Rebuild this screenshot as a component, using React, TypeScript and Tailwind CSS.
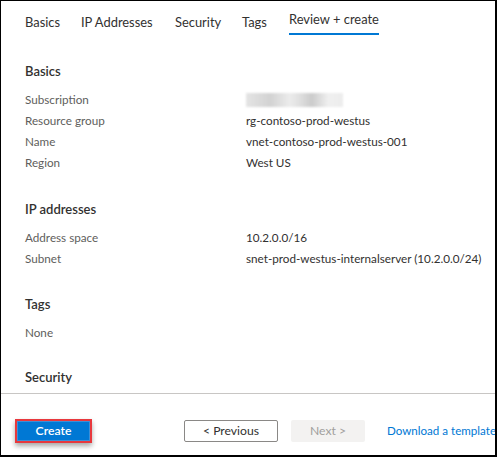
import React from 'react';

const TABS = [
  { label: 'Basics', w: 'w-[56px]' },
  { label: 'IP Addresses', w: 'w-[94px]' },
  { label: 'Security', w: 'w-[67px]' },
  { label: 'Tags', w: 'w-[47px]' },
];

type Row = { label: string; value?: string; blurred?: boolean };

const Section: React.FC<{ title: string; rows: Row[]; top: string }> = ({ title, rows, top }) => (
  <div className={top}>
    <div className="h-[20px] leading-[20px] text-[13px] font-semibold text-[#323130]">{title}</div>
    <div className="mt-[8px]">
      {rows.map((r) => (
        <div key={r.label} className="grid grid-cols-[221px_1fr] h-[21px] leading-[21px] text-[11.7px]">
          <span className="text-[#605e5c]">{r.label}</span>
          {r.blurred ? (
            <span className="flex items-center">
              <span className="block w-[97px] h-[14px] blur-[1px] bg-[linear-gradient(90deg,#e4e4e4,#d2d2d2_25%,#ececec_45%,#e0e0e0_55%,#cbcbcb_68%,#f0f0f0_85%,#ececec)]" />
            </span>
          ) : (
            <span className="text-[#323130] whitespace-nowrap">{r.value}</span>
          )}
        </div>
      ))}
    </div>
  </div>
);

export default function App() {
  return (
    <div
      className="w-[497px] h-[457px] bg-white border-t border-l border-r-2 border-b-2 border-black overflow-hidden flex flex-col"
      style={{ fontFamily: 'Lato, "Noto Sans", sans-serif' }}
    >
      <div className="flex-1 overflow-hidden pl-[24px]">
        {/* tabs */}
        <div className="flex h-[34px]">
          {TABS.map((t) => (
            <div key={t.label} className={`${t.w} shrink-0 pt-[8px]`}>
              <span className="text-[12.9px] leading-[20px] text-[#323130] whitespace-nowrap">{t.label}</span>
            </div>
          ))}
          <div className="pt-[8px] shrink-0">
            <div className="text-[12.9px] leading-[20px] text-[#323130] pb-[4px] border-b-2 border-[#0078d4] whitespace-nowrap">
              Review + create
            </div>
          </div>
        </div>

        <Section
          title="Basics"
          top="mt-[26px]"
          rows={[
            { label: 'Subscription', blurred: true },
            { label: 'Resource group', value: 'rg-contoso-prod-westus' },
            { label: 'Name', value: 'vnet-contoso-prod-westus-001' },
            { label: 'Region', value: 'West US' },
          ]}
        />
        <Section
          title="IP addresses"
          top="mt-[26px]"
          rows={[
            { label: 'Address space', value: '10.2.0.0/16' },
            { label: 'Subnet', value: 'snet-prod-westus-internalserver (10.2.0.0/24)' },
          ]}
        />
        <Section title="Tags" top="mt-[25px]" rows={[{ label: 'None', value: '' }]} />
        <div className="mt-[24px] h-[20px] leading-[20px] text-[13px] font-semibold text-[#323130]">Security</div>
      </div>

      <div className="h-[62px] shrink-0 border-t border-[#c8c6c4] flex items-start pt-[25px] pl-[14px] text-[12.2px]">
        <div className="w-[77px] h-[24px] shrink-0 border-2 border-[#e8383d] shadow-[0_3px_5px_rgba(0,0,0,0.35)] flex">
          <button className="flex-1 bg-[#0078d4] border border-[#3b8fd8] text-white font-semibold leading-[18px]">
            Create
          </button>
        </div>
        <button className="ml-[92px] mt-[1px] w-[94px] h-[22px] shrink-0 border border-[#8a8886] rounded-[2px] text-[#323130] leading-[20px]">
          &lt; Previous
        </button>
        <button className="ml-[13px] mt-[1px] w-[74px] h-[22px] shrink-0 bg-[#f3f2f1] rounded-[2px] text-[#a19f9d] leading-[22px]">
          Next &gt;
        </button>
        <span className="ml-[22px] mt-[2px] shrink-0 leading-[20px] text-[11.6px] text-[#0078d4] whitespace-nowrap">
          Download a template
        </span>
      </div>
    </div>
  );
}
